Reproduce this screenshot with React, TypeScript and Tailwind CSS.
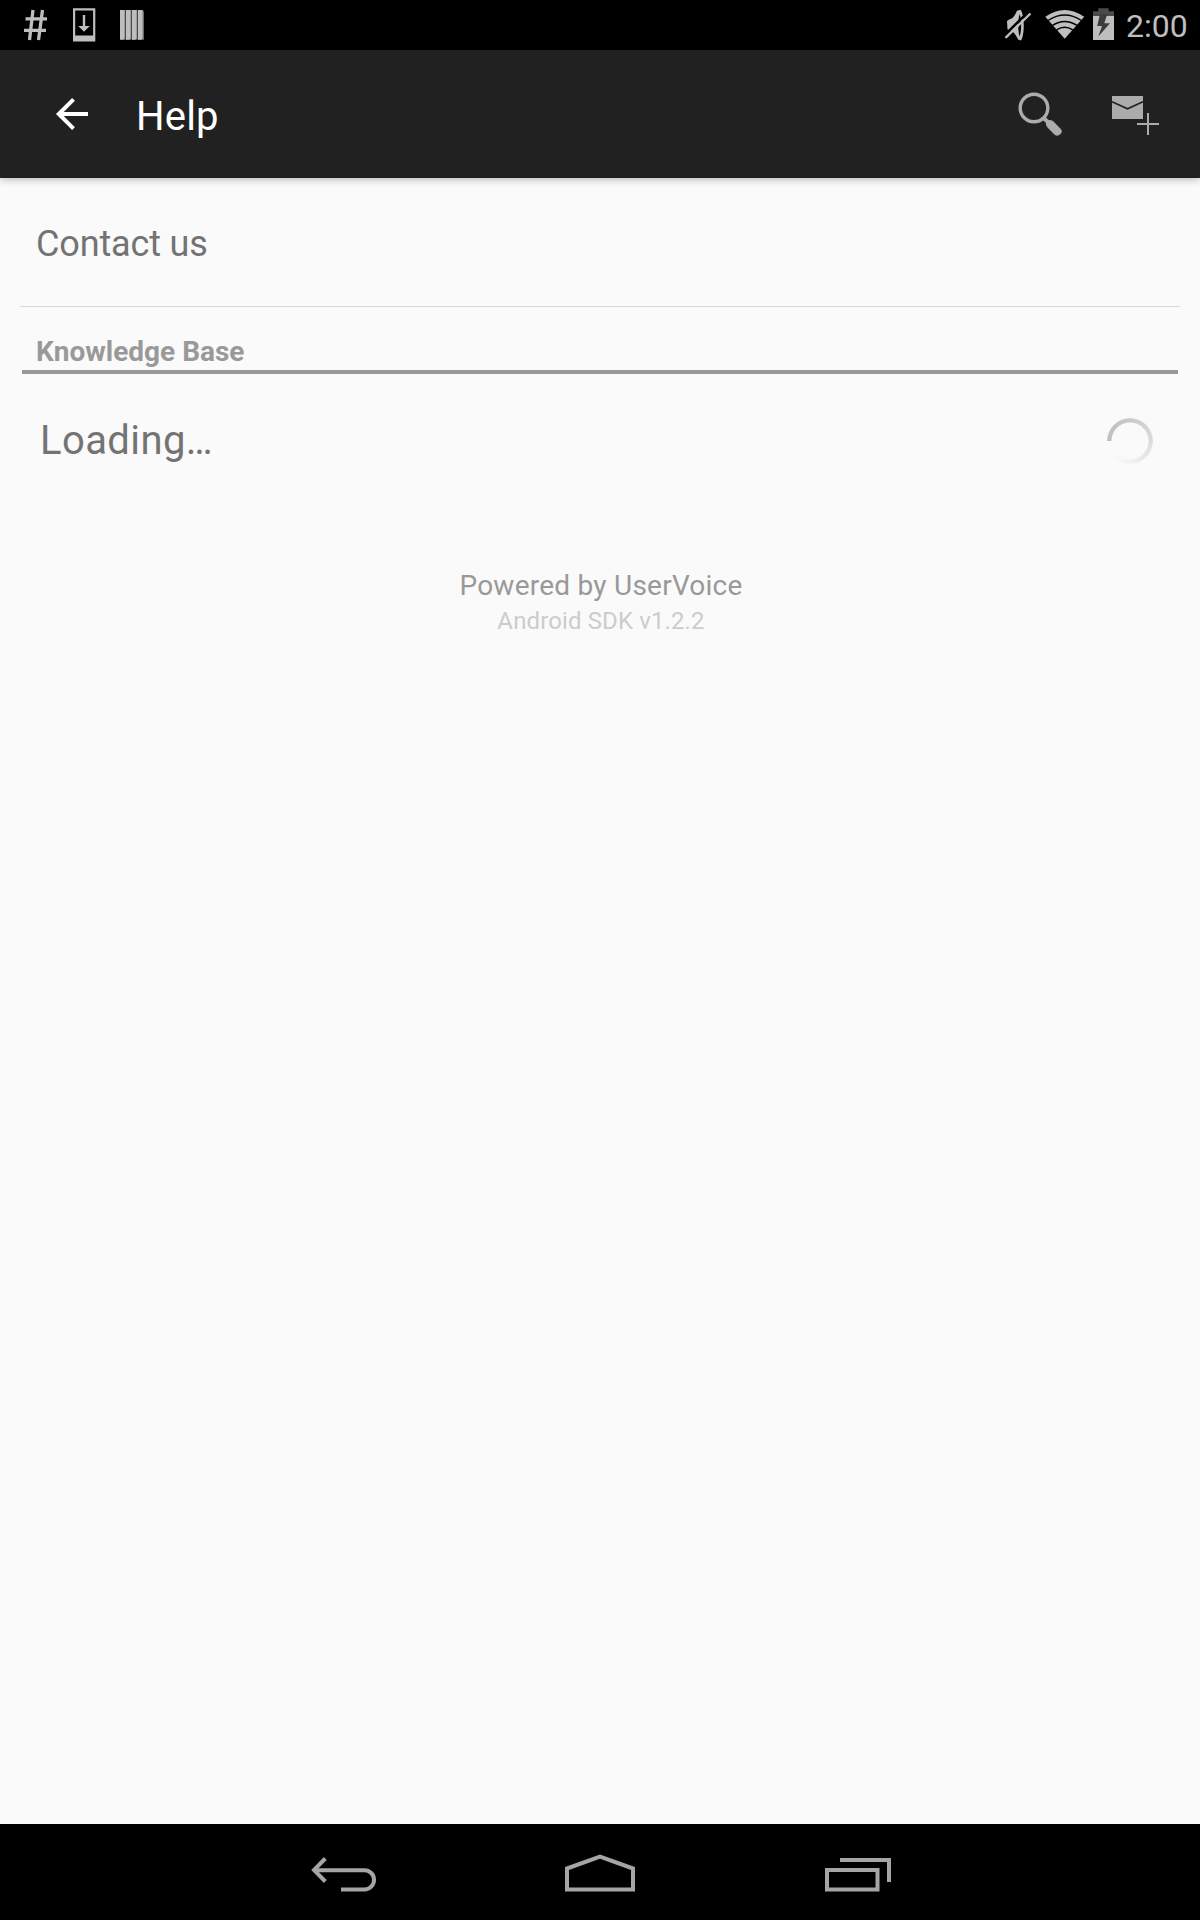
import React from 'react';

function StatusBar() {
  return (
    <header className="flex h-[50px] items-center justify-between bg-black">
      <div className="flex">
        <svg className="ml-[20px]" width="32" height="50" viewBox="20 0 32 50" fill="none" stroke="#bebebe" strokeWidth="3.3">
          <path d="M33 10 29.500 40M42.500 10 38.500 40M25.500 18.800H47M24 30.400H46" />
        </svg>
        <svg className="ml-[18px]" width="28" height="50" viewBox="70 0 28 50" fill="#bebebe">
          <path fillRule="evenodd" d="M73 8.300H95.300V41.500H73ZM75.200 10.500V35.600H93.100V10.500Z" />
          <path d="M82.800 15H85.200V26H89.800L84 31.700 78.200 26H82.800Z" />
        </svg>
        <svg className="ml-[20px]" width="28" height="50" viewBox="118 0 28 50">
          <path d="M120 10H142.500L144 11.500V39.800H121.500Z" fill="#6c6c6c" />
          <g fill="#bebebe">
            <path d="M120 10H124.600V38.500L123.300 39.700H120Z" />
            <path d="M126 10H130.600V38.500L129.300 39.700H126Z" />
            <path d="M132 10H136.600V38.500L135.300 39.700H132Z" />
            <path d="M138 10H142.600V38.500L141.300 39.700H138Z" />
          </g>
          <path d="M125.500 10V40M131.500 10V40M137.500 10V40" stroke="#333" strokeWidth=".6" />
        </svg>
      </div>
      <div className="flex">
        <svg width="30" height="50" viewBox="1004 0 30 50">
          <path d="M1007 21 1010 19C1013 19 1015.500 14 1017 10.700L1020.500 9.800C1024.500 14 1025 35 1021 40.500L1018 39.500C1016 35 1014 32 1011 31L1007.500 29.500Z" fill="#bebebe" />
          <path d="M1019.600 14C1021.700 20 1021.700 31 1019.600 36.500C1017.800 31 1017.800 20 1019.600 14Z" fill="#000" />
          <path d="M1004 35.800 1028.500 11.600" stroke="#000" strokeWidth="2.500" />
          <path d="M1005.500 37.800 1030.500 13.500" stroke="#bebebe" strokeWidth="2.400" />
        </svg>
        <svg className="ml-[10px]" width="42" height="50" viewBox="1044 0 42 50">
          <path d="M1045.300 16.800Q1064.700 3 1084.200 16.800L1064.700 38.700Z" fill="#bebebe" />
          <path d="M1048 20.500Q1064.700 9.300 1081.500 20.500M1052.500 25.400Q1064.700 17.500 1077 25.400M1056.600 29.900Q1064.700 24.800 1072.800 29.900" fill="none" stroke="#000" strokeWidth="1.500" />
        </svg>
        <svg className="ml-[5px]" width="26" height="50" viewBox="1091 0 26 50">
          <path d="M1098.300 8.200H1108.700V11.300H1114V16H1093V11.300H1098.300Z" fill="#4b4b4b" />
          <path d="M1093 16H1114V40H1093Z" fill="#bebebe" />
          <path d="M1100 14H1107.300L1104.300 23.300H1110L1098.300 36.500 1102 26H1097.200Z" fill="#3c3c3c" />
        </svg>
        <span className="ml-[9px] mr-[12px] mt-[1px] w-[62px] whitespace-nowrap text-[32px] leading-[50px] text-[#bebebe]">2:00</span>
      </div>
    </header>
  );
}

function AppBar() {
  return (
    <div className="relative z-10 flex h-[128px] items-center bg-[#212121] shadow-[0_1px_8px_rgba(0,0,0,0.3)]">
      <svg className="ml-[52px]" width="40" height="128" viewBox="52 50 40 128" fill="none" stroke="#fff" strokeWidth="4">
        <path d="M88 114H60M73.500 99.300 58.800 114 73.500 128.700" />
      </svg>
      <h1 className="ml-[44px] mt-[5px] text-[40px] leading-[48px] tracking-[0.2px] text-white">Help</h1>
      <svg className="ml-auto" width="52" height="128" viewBox="1014 50 52 128">
        <circle cx="1034" cy="108" r="13.800" fill="none" stroke="#acacac" strokeWidth="3.400" />
        <path d="M1043.500 118 1049 123" stroke="#acacac" strokeWidth="4" />
        <path d="M1047 121.300Q1050.500 118.500 1053.500 121.500L1060.800 129Q1063 131.500 1060.500 134Q1057.300 137 1054.300 134.600L1047.500 127.500Q1044.500 124 1047 121.300Z" fill="#acacac" />
      </svg>
      <svg className="ml-[42px] mr-[38px]" width="54" height="128" viewBox="1108 50 54 128" fill="none">
        <path d="M1112 96H1143V119H1112Z" fill="#acacac" />
        <path d="M1112 101.800 1127.500 108.800 1143 101.800" stroke="#212121" strokeWidth="1.600" />
        <path d="M1137 124H1159M1148 113V135" stroke="#acacac" strokeWidth="2" />
      </svg>
    </div>
  );
}

function NavigationBar() {
  return (
    <nav className="flex h-[96px] items-center bg-black">
      <svg className="ml-[308px]" width="72" height="96" viewBox="308 1824 72 96" fill="none" stroke="#a5a5a5" strokeWidth="4">
        <path d="M314 1870.200H364.400A9.600 9.600 0 0 1 364.400 1889.500H341" />
        <path d="M325.300 1858.500 314 1870 325.300 1881.500" />
      </svg>
      <svg className="ml-[180px]" width="80" height="96" viewBox="560 1824 80 96" fill="none" stroke="#a5a5a5" strokeWidth="4">
        <path d="M567 1889.500V1868.500L600 1856.700 633 1868.500V1889.500Z" />
      </svg>
      <svg className="ml-[180px]" width="80" height="96" viewBox="820 1824 80 96" fill="none" stroke="#a5a5a5" strokeWidth="4">
        <path d="M827 1870H877.500V1889.500H827ZM840 1860H889V1882" />
      </svg>
    </nav>
  );
}

export default function App() {
  return (
    <div className="flex h-[1920px] w-[1200px] flex-col overflow-hidden bg-[#fafafa] font-['Roboto',sans-serif]">
      <StatusBar />
      <AppBar />
      <main className="flex flex-1 flex-col">
        <div className="mx-[20px] flex h-[129px] items-center border-b border-[#d8d8d8] pl-[16px] pt-[4px] text-[36px] leading-[42px] tracking-[-0.15px] text-[#737373]">
          <span>Contact us</span>
        </div>
        <h2 className="mx-[22px] flex h-[67px] items-end border-b-4 border-[#999] pl-[14px] text-[28px] font-bold leading-[36px] text-[#999]">
          <span>Knowledge Base</span>
        </h2>
        <div className="flex h-[134px] items-center justify-between pl-[40px] pr-[47px]">
          <span className="text-[40px] leading-[48px] tracking-[0.4px] text-[#737373]">Loading…</span>
          <div className="size-[46px] rounded-full bg-[conic-gradient(from_270deg,#bfbfbf,#cacaca_25%,#dcdcdc_50%,#efefef_72%,#fafafa_88%)] [mask-image:radial-gradient(circle,transparent_18px,black_19px)]" />
        </div>
        <footer className="flex flex-col items-center pl-[2px] pt-[60px]">
          <span className="text-[28px] leading-[36px] tracking-[0.24px] text-[#999]">Powered by UserVoice</span>
          <span className="text-[24px] leading-[34px] tracking-[0.12px] text-[#ccc]">Android SDK v1.2.2</span>
        </footer>
      </main>
      <NavigationBar />
    </div>
  );
}
